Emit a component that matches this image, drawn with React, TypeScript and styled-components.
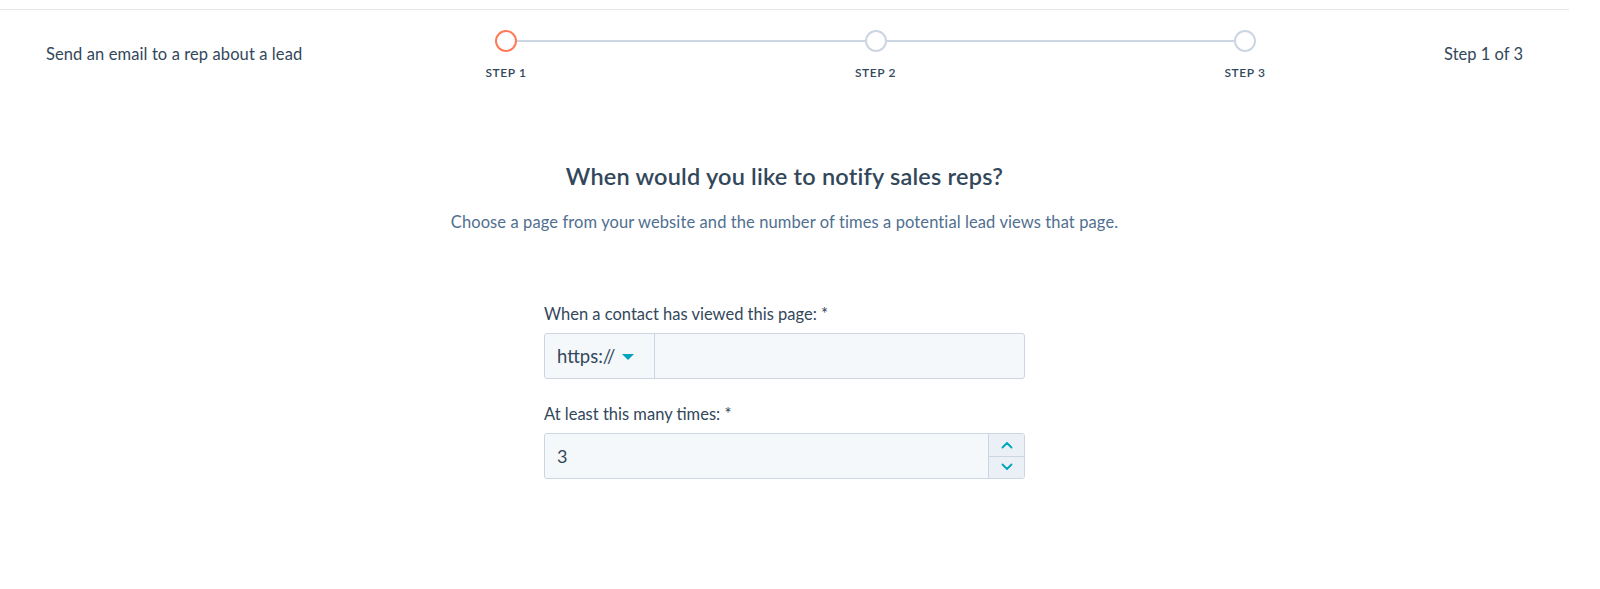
import React from "react";
import styled, { createGlobalStyle } from "styled-components";

const GlobalStyle = createGlobalStyle`
  * { box-sizing: border-box; }
  body {
    margin: 0;
    background: #ffffff;
    font-family: Lato, "Open Sans", sans-serif;
    color: #33475b;
  }
`;

const steps = ["Step 1", "Step 2", "Step 3"];

const Page = styled.div`
  width: 1569px;
  padding-top: 9px;
`;

const Header = styled.header`
  display: grid;
  grid-template-columns: 430px 799px 1fr;
  align-items: start;
  border-top: 1px solid #e3e6ea;
  padding: 20px 46px 0;
`;

const FlowName = styled.div`
  font-size: 16.5px;
  margin-top: 14px;
  letter-spacing: 0.1px;
`;

const StepCounter = styled.div`
  font-size: 16.5px;
  margin-top: 14px;
  text-align: right;
`;

const Stepper = styled.div`
  display: flex;
  align-items: flex-start;
`;

const Step = styled.div`
  width: 60px;
  display: flex;
  flex-direction: column;
  align-items: center;
  position: relative;
  z-index: 1;
`;

const Circle = styled.div<{ $active?: boolean }>`
  width: 22px;
  height: 22px;
  border-radius: 50%;
  background: #fff;
  border: 2px solid ${(p) => (p.$active ? "#ff7a59" : "#cbd6e2")};
`;

const StepLabel = styled.div`
  margin-top: 13px;
  font-size: 12px;
  font-weight: 600;
  text-transform: uppercase;
  letter-spacing: 0.6px;
`;

const Connector = styled.div`
  flex: 1;
  height: 2px;
  margin: 10px -19px 0;
  background: #cbd6e2;
`;

const Main = styled.main`
  display: flex;
  flex-direction: column;
  align-items: center;
  padding-top: 82px;
`;

const Title = styled.h2`
  margin: 0;
  font-size: 23.5px;
  font-weight: 600;
  letter-spacing: 0.2px;
`;

const Subtitle = styled.p`
  margin: 22px 0 0;
  font-size: 16.5px;
  color: #516f90;
  letter-spacing: 0.1px;
`;

const Form = styled.form`
  width: 481px;
  margin-top: 72px;
  display: flex;
  flex-direction: column;
  gap: 25px;
`;

const Field = styled.div`
  display: flex;
  flex-direction: column;
`;

const Label = styled.label`
  font-size: 16.5px;
  margin-bottom: 9px;
`;

const InputBox = styled.div`
  display: flex;
  height: 46px;
  background: #f5f8fa;
  border: 1px solid #cbd6e2;
  border-radius: 3px;
  overflow: hidden;
`;

const Prefix = styled.div`
  width: 110px;
  display: flex;
  align-items: center;
  gap: 7px;
  padding-left: 12px;
  border-right: 1px solid #cbd6e2;
  font-size: 18.5px;
`;

const Caret = styled.span`
  width: 0;
  height: 0;
  border-left: 6px solid transparent;
  border-right: 6px solid transparent;
  border-top: 6px solid #00a4bd;
  margin-top: 2px;
`;

const TextInput = styled.input`
  flex: 1;
  border: none;
  background: transparent;
  font: inherit;
  font-size: 18px;
  color: #33475b;
  padding: 0 12px;
  outline: none;
`;

const Spinner = styled.div`
  width: 36px;
  display: flex;
  flex-direction: column;
  border-left: 1px solid #cbd6e2;
`;

const SpinButton = styled.button`
  flex: 1;
  border: none;
  background: #eaf0f6;
  display: flex;
  align-items: center;
  justify-content: center;
  padding: 0;
  & + & {
    border-top: 1px solid #cbd6e2;
  }
`;

const Chevron = ({ up }: { up?: boolean }) => (
  <svg width="12" height="8" viewBox="0 0 12 8">
    <path
      d={up ? "M1.5 6.5 L6 2 L10.5 6.5" : "M1.5 1.5 L6 6 L10.5 1.5"}
      fill="none"
      stroke="#00a4bd"
      strokeWidth="1.8"
      strokeLinecap="round"
      strokeLinejoin="round"
    />
  </svg>
);

export default function App() {
  return (
    <>
      <GlobalStyle />
      <Page>
        <Header>
          <FlowName>Send an email to a rep about a lead</FlowName>
          <Stepper>
            {steps.map((s, i) => (
              <React.Fragment key={s}>
                {i > 0 && <Connector />}
                <Step>
                  <Circle $active={i === 0} />
                  <StepLabel>{s}</StepLabel>
                </Step>
              </React.Fragment>
            ))}
          </Stepper>
          <StepCounter>Step 1 of 3</StepCounter>
        </Header>
        <Main>
          <Title>When would you like to notify sales reps?</Title>
          <Subtitle>
            Choose a page from your website and the number of times a potential lead views that page.
          </Subtitle>
          <Form onSubmit={(e) => e.preventDefault()}>
            <Field>
              <Label>When a contact has viewed this page: *</Label>
              <InputBox>
                <Prefix>
                  https://
                  <Caret />
                </Prefix>
                <TextInput type="text" />
              </InputBox>
            </Field>
            <Field>
              <Label>At least this many times: *</Label>
              <InputBox>
                <TextInput type="text" defaultValue="3" />
                <Spinner>
                  <SpinButton type="button">
                    <Chevron up />
                  </SpinButton>
                  <SpinButton type="button">
                    <Chevron />
                  </SpinButton>
                </Spinner>
              </InputBox>
            </Field>
          </Form>
        </Main>
      </Page>
    </>
  );
}
